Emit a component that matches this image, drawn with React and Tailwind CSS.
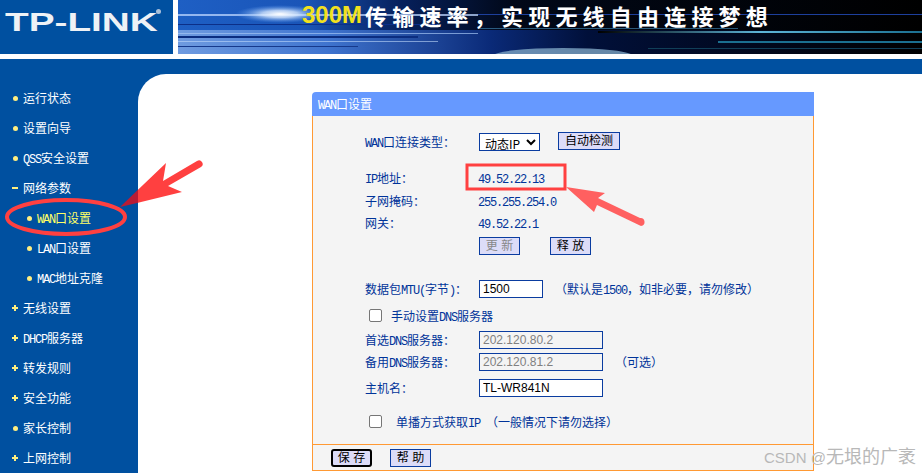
import React from 'react'

const cjk = "font-['Liberation_Mono','Noto_Sans_CJK_SC',monospace]"

// SimSun style text: latin is half the width of a hanzi
const Mix = ({ text }) => {
    const parts = text.split(/([\x20-\x7e]+)/).filter(Boolean)
    return (
        <span className="inline-block pt-[4px] whitespace-nowrap">
            {parts.map((p, i) =>
                /^[\x20-\x7e]+$/.test(p)
                    ? <span key={i} className="tracking-[-1.2px] whitespace-pre">{p}</span>
                    : <span key={i}>{p}</span>
            )}
        </span>
    )
}

const menu = [
    { label: '运行状态', icon: 'dot' },
    { label: '设置向导', icon: 'dot' },
    { label: 'QSS安全设置', icon: 'dot' },
    { label: '网络参数', icon: 'minus' },
    { label: 'WAN口设置', icon: 'dot', sub: true, active: true },
    { label: 'LAN口设置', icon: 'dot', sub: true },
    { label: 'MAC地址克隆', icon: 'dot', sub: true },
    { label: '无线设置', icon: 'plus' },
    { label: 'DHCP服务器', icon: 'plus' },
    { label: '转发规则', icon: 'plus' },
    { label: '安全功能', icon: 'plus' },
    { label: '家长控制', icon: 'dot' },
    { label: '上网控制', icon: 'plus' },
]

const MenuIcon = ({ type }) => {
    if (type === 'dot') return <span className="w-[5px] h-[5px] rounded-full bg-[#ffee80]" />
    if (type === 'minus') return <span className="w-[6px] h-[2px] bg-[#ffee80]" />
    return (
        <svg width="6" height="6" viewBox="0 0 6 6">
            <path d="M2 0h2v2h2v2H4v2H2V4H0V2h2z" fill="#ffee80" />
        </svg>
    )
}

const Sidebar = () => (
    <div className={`w-[138px] shrink-0 pt-[9px] ${cjk} text-[12px] text-white`}>
        {menu.map((m) => (
            <div key={m.label} className={`h-[30px] flex items-center ${m.sub ? 'pl-[26px]' : 'pl-[12px]'}`}>
                <div className="w-[6px] flex justify-center">
                    <MenuIcon type={m.icon} />
                </div>
                <div className={`ml-[5px] whitespace-nowrap ${m.active ? 'text-[#ffff66]' : 'text-white'}`}>
                    <Mix text={m.label} />
                </div>
            </div>
        ))}
    </div>
)

const Banner = () => (
    <div className="relative flex-1 overflow-hidden bg-black">
        <svg className="absolute inset-0" width="744" height="54" viewBox="0 0 744 54" preserveAspectRatio="none">
            <defs>
                <linearGradient id="base" x1="0" x2="1" y1="0" y2="0">
                    <stop offset="0" stopColor="#1e5fc4" />
                    <stop offset="0.17" stopColor="#1a55b8" />
                    <stop offset="0.3" stopColor="#06205c" />
                    <stop offset="0.45" stopColor="#010818" />
                    <stop offset="1" stopColor="#000000" />
                </linearGradient>
                <linearGradient id="low" x1="0" x2="1" y1="0" y2="0">
                    <stop offset="0" stopColor="#6f9be0" />
                    <stop offset="0.2" stopColor="#3f74cf" />
                    <stop offset="0.42" stopColor="#0a2a78" />
                    <stop offset="0.55" stopColor="#01103a" />
                    <stop offset="1" stopColor="#000000" />
                </linearGradient>
                <linearGradient id="teal" x1="0" x2="1" y1="0" y2="0">
                    <stop offset="0" stopColor="#000" />
                    <stop offset="0.5" stopColor="#5db4d8" />
                    <stop offset="1" stopColor="#1b6f90" />
                </linearGradient>
                <radialGradient id="flare">
                    <stop offset="0" stopColor="#ffffff" />
                    <stop offset="0.4" stopColor="#d6e8ff" stopOpacity="0.8" />
                    <stop offset="1" stopColor="#5f9cf0" stopOpacity="0" />
                </radialGradient>
            </defs>
            <rect width="744" height="54" fill="url(#base)" />
            <rect y="30" width="744" height="24" fill="url(#low)" />
            <rect y="14" width="300" height="2" fill="#bcd6ff" opacity="0.75" />
            <rect y="14" x="300" width="444" height="1" fill="#1d3f9c" />
            <ellipse cx="102" cy="14" rx="45" ry="9" fill="url(#flare)" />
            <rect y="24" width="260" height="1" fill="#0c2f88" />
            <rect y="33" width="300" height="1" fill="#a4c4f4" opacity="0.7" />
            <rect y="36" width="240" height="2" fill="#0b2d80" />
            <rect y="41" width="260" height="1" fill="#c0d8fa" opacity="0.6" />
            <rect y="46" width="180" height="1" fill="#16398c" />
            <rect x="420" y="31" width="324" height="2" fill="url(#teal)" />
            <rect x="300" y="28" width="260" height="1" fill="#3c7da8" opacity="0.7" />
            <rect x="540" y="41" width="204" height="2" fill="#1b6f90" />
            <rect x="470" y="48" width="274" height="1" fill="#103f58" />
            <ellipse cx="385" cy="56" rx="70" ry="8" fill="#7fa6c4" opacity="0.8" />
        </svg>
        <div className="relative flex items-center h-[30px] pl-[124px] font-['Noto_Sans_CJK_SC',sans-serif] font-bold whitespace-nowrap">
            <span className="font-['Liberation_Sans',sans-serif] text-[24px] leading-none text-[#f2e11e] w-[63px]">300M</span>
            <span className="text-[22px] leading-[26px] tracking-[5.2px] text-white">传输速率，实现无线自由连接梦想</span>
        </div>
    </div>
)

const Header = () => (
    <div className="flex h-[54px] gap-[5px] bg-white">
        <div className="w-[173px] bg-[#0050a0] relative overflow-hidden">
            <div className="absolute left-[5px] top-[3px] origin-left scale-x-[1.49] font-['Liberation_Sans',sans-serif] font-bold text-[26px] text-[#eef2f6] whitespace-nowrap">
                TP-LINK
            </div>
            <div className="absolute left-[156px] top-[9px] w-[5px] h-[5px] rounded-full bg-[#a9c0da]" />
        </div>
        <Banner />
    </div>
)

const Row = ({ label, className = '', children }) => (
    <div className={`flex items-center h-[22px] ${className}`}>
        <div className="w-[113px] shrink-0 whitespace-nowrap"><Mix text={label} /></div>
        {children}
    </div>
)

const Btn = ({ children, color = 'text-black', className = '' }) => (
    <button className={`h-[18px] w-[41px] border border-[#0a3ca0] bg-[#dcdcf8] font-['Liberation_Sans','Noto_Sans_CJK_SC',sans-serif] text-[12px] leading-none whitespace-pre ${color} ${className}`}>
        {children}
    </button>
)

const Field = ({ value, disabled, className = '' }) => (
    <input
        readOnly
        value={value}
        className={`h-[18px] border border-[#0a3ca0] px-[3px] font-['Liberation_Sans',sans-serif] text-[12px] outline-none ${disabled ? 'bg-[#f4f4f4] text-[#808080]' : 'bg-white text-black'} ${className}`}
    />
)

const Check = () => (
    <span className="block w-[13px] h-[13px] -mt-[2px] rounded-[2px] border border-[#767676] bg-white" />
)

const Panel = () => (
    <div className={`ml-[174px] mt-[18px] w-[502px] ${cjk} text-[12px] text-[#003399]`}>
        <div className="h-[24px] flex items-center pl-[6px] bg-[#6699ff] text-white rounded-tl-[4px]">
            <Mix text="WAN口设置" />
        </div>
        <div className="h-[328px] bg-[#f4f4f4] border-x border-[#ff9933] pl-[52px] pt-[15px]">
            <Row label="WAN口连接类型：">
                <select className="h-[18px] w-[61px] ml-[1px] border border-[#0a3ca0] bg-white pl-[1px] text-[12px] text-black font-['Noto_Sans_CJK_SC','Liberation_Sans',sans-serif]">
                    <option>动态IP</option>
                </select>
                <Btn className="w-[62px] ml-[18px] -mt-[2px]">自动检测</Btn>
            </Row>
            <Row label="IP地址：" className="mt-[14px]"><Mix text="49.52.22.13" /></Row>
            <Row label="子网掩码：" className="mt-[1px]"><Mix text="255.255.254.0" /></Row>
            <Row label="网关：" ><Mix text="49.52.22.1" /></Row>
            <Row label="" className="mt-[1px]">
                <Btn color="text-[#888888]" className="ml-[1px]">更 新</Btn>
                <Btn className="ml-[30px]">释 放</Btn>
            </Row>
            <Row label="数据包MTU(字节)：" className="mt-[21px]">
                <Field value="1500" className="w-[64px] ml-[1px]" />
                <span className="ml-[12px] whitespace-nowrap"><Mix text="（默认是1500，如非必要，请勿修改）" /></span>
            </Row>
            <div className="flex items-center h-[22px] mt-[5px] pl-[4px]">
                <Check />
                <span className="ml-[9px] whitespace-nowrap"><Mix text="手动设置DNS服务器" /></span>
            </div>
            <Row label="首选DNS服务器：" className="mt-[2px]">
                <Field disabled value="202.120.80.2" className="w-[124px] ml-[1px]" />
            </Row>
            <Row label="备用DNS服务器：">
                <Field disabled value="202.120.81.2" className="w-[124px] ml-[1px]" />
                <span className="ml-[12px] whitespace-nowrap"><Mix text="（可选）" /></span>
            </Row>
            <Row label="主机名：" className="mt-[4px]">
                <Field value="TL-WR841N" className="w-[124px] ml-[1px]" />
            </Row>
            <div className="flex items-center h-[22px] mt-[12px] pl-[4px]">
                <Check />
                <span className="ml-[14px] whitespace-nowrap"><Mix text="单播方式获取IP （一般情况下请勿选择）" /></span>
            </div>
        </div>
        <div className="h-[27px] bg-[#f4f4f4] border border-[#ff9933] flex items-center pl-[18px] gap-[18px]">
            <Btn className="border-2 border-black rounded-[3px] h-[17px]">保 存</Btn>
            <Btn>帮 助</Btn>
        </div>
    </div>
)

// red marks someone drew over the screenshot
const Annotations = () => (
    <svg className="absolute inset-0 pointer-events-none" width="922" height="473" viewBox="0 0 922 473">
        <defs>
            <clipPath id="onWhite"><rect x="138" y="0" width="784" height="473" /></clipPath>
            <clipPath id="onBlue"><rect x="0" y="0" width="138" height="473" /></clipPath>
        </defs>
        <g clipPath="url(#onWhite)">
            <path d="M120 207L166 163L163 181L197 161A3 3 0 0 1 201 167L168 186L182 192Z" fill="#ff4040" />
        </g>
        <g clipPath="url(#onBlue)">
            <path d="M120 207L166 163L163 181L197 161A3 3 0 0 1 201 167L168 186L182 192Z" fill="#b81c36" />
        </g>
        <ellipse cx="66" cy="217" rx="59" ry="17" fill="none" stroke="#ff4040" strokeWidth="4" />
        <rect x="467" y="165" width="98" height="24" fill="none" stroke="#ff4040" strokeWidth="3" />
        <path d="M566 187L605 193L598 198L640 218A4 4 0 0 1 641 226L597 205L594 212Z" fill="#ff6060" />
    </svg>
)

export default function App() {
    return (
        <div className="relative w-[922px] h-[473px] overflow-hidden bg-white">
            <Header />
            <div className="h-[5px] bg-white" />
            <div className="h-[15px] bg-[#0050a0]" />
            <div className="flex h-[399px] bg-[#0050a0]">
                <Sidebar />
                <div className="flex-1 bg-white rounded-tl-[28px]">
                    <Panel />
                </div>
            </div>
            <Annotations />
            <div className="absolute left-[764px] top-[444px] flex items-baseline font-['Liberation_Sans','Noto_Sans_CJK_SC',sans-serif] text-[#b8b8b8] whitespace-nowrap">
                <span className="text-[15px] whitespace-pre">CSDN </span>
                <span className="text-[15px]">@</span>
                <span className="text-[18px]">无垠的广袤</span>
            </div>
        </div>
    )
}
